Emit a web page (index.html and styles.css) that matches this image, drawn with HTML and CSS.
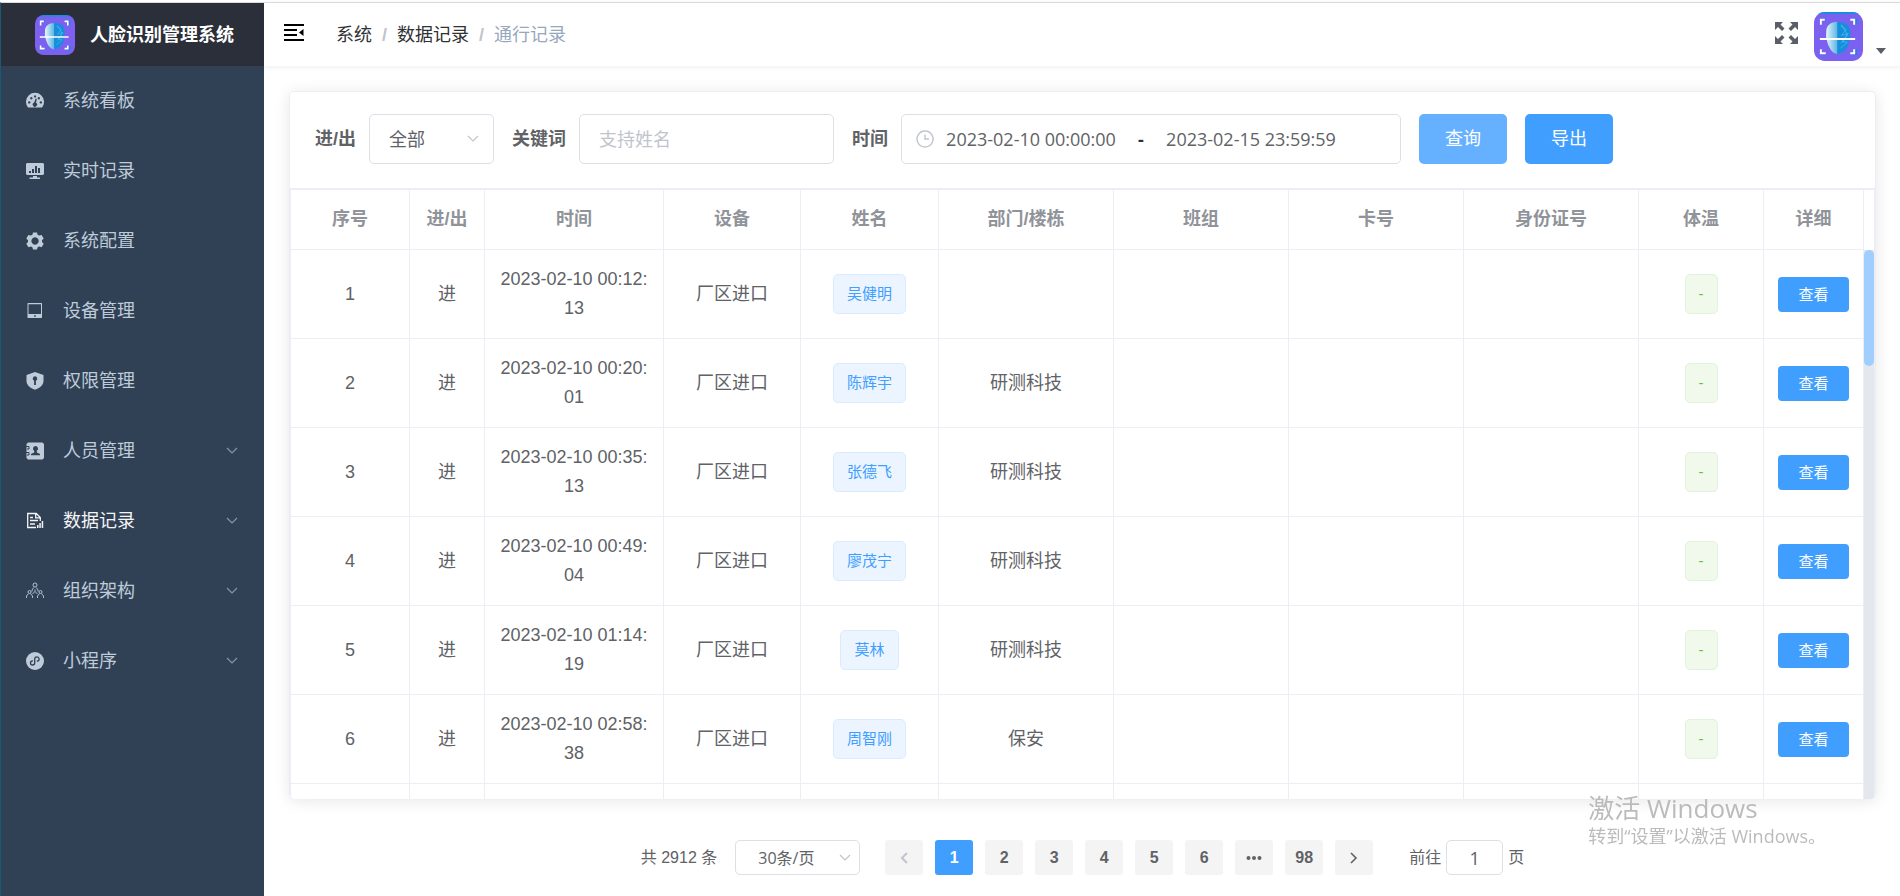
FILE: index.html
```html
<!DOCTYPE html>
<html lang="zh-CN">
<head>
<meta charset="utf-8">
<title>人脸识别管理系统</title>
<link rel="stylesheet" href="styles.css">
</head>
<body>
<svg class="defs" aria-hidden="true">
  <defs>
    <linearGradient id="face-left" x1="0" x2="1" y1="0" y2="0">
      <stop offset="0" stop-color="#e6f5fb"/><stop offset="1" stop-color="#56b6e2"/>
    </linearGradient>
    <clipPath id="logo-clip"><rect width="50" height="50" rx="11"/></clipPath>
    <symbol id="logo" viewBox="0 0 50 50">
      <g clip-path="url(#logo-clip)">
        <rect width="50" height="50" fill="#7c60f0"/>
        <rect width="50" height="2" fill="#1590dc"/>
        <path d="M24 10c-7 0-11.500 4-11.500 10 0 4-.5 5 .5 8 1 5 4 14 11 15z" fill="url(#face-left)"/>
        <path d="M24 10c8 0 13 4 13 11 0 9-2 20-13 22z" fill="#1390dc"/>
        <path d="M27 14l6 4-5 6 7-2-6 8 5 1-7 6m1-24l6 10-6 9" fill="none" stroke="#7cc4f4" stroke-width=".5"/>
        <path d="M7 13V8h5M38 8h5v5M43 38v5h-5M12 43H7v-5" fill="none" stroke="#1a86d8" stroke-width="2"/>
        <path d="M7 13V8h4M37 8h4v5M41 38v4h-4M12 42H7v-4" fill="none" stroke="#fff" stroke-width="2"/>
        <path d="M6 27.500h36" stroke="#fff" stroke-width="2"/>
      </g>
    </symbol>
    <symbol id="down" viewBox="0 0 12 8"><path d="M1 1l5 5 5-5" fill="none" stroke="currentColor" stroke-width="1.200"/></symbol>
  </defs>
</svg>
<div class="app">
  <aside class="sidebar">
    <div class="brand"><svg class="brand-logo"><use href="#logo"/></svg><h1>人脸识别管理系统</h1></div>
    <nav class="menu">
      <a href="#" class="menu-item">
        <svg class="menu-icon" viewBox="0 0 18 18"><path fill="currentColor" fill-rule="evenodd" d="M2 15.500A9 9 0 1 1 16 15.500zM3.200 9.200a1.200 1.200 0 1 0 .1 0zM5.300 5a1.200 1.200 0 1 0 .1 0zM9 3.300a1.100 1.100 0 1 0 .1 0zM14.800 9.200a1.200 1.200 0 1 0 .1 0zM12.800 5a1.200 1.200 0 1 0 .1 0zM9.600 6.500L8.200 10.600a2.100 2.100 0 1 0 1.800.2l.8-4z"/></svg>
        <span>系统看板</span></a>
      <a href="#" class="menu-item">
        <svg class="menu-icon" viewBox="0 0 18 18"><path fill="currentColor" fill-rule="evenodd" d="M1 1h16l1 1v10l-1 1H1l-1-1V2zM3 9v2h2V9zM6 7v4h2V7zM9 4v7h2V4zM12 6v5h2V6zM7 14h4v1.500h3V17H3.500v-1.500H7z"/></svg>
        <span>实时记录</span></a>
      <a href="#" class="menu-item">
        <svg class="menu-icon" viewBox="0 0 18 18"><path fill="currentColor" fill-rule="evenodd" d="M7 .5h4l.6 2.300 1.500.8 2.500-.7 2.100 3.500-1.700 1.800v1.700l1.700 1.800-2.100 3.500-2.500-.7-1.500.8L11 17.500H7l-.6-2.200-1.500-.8-2.500.7-2.100-3.500L2 9.900V8.200L.3 6.400l2.100-3.500 2.500.7 1.500-.8zM9 5.300a3.700 3.700 0 1 0 .1 0z"/></svg>
        <span>系统配置</span></a>
      <a href="#" class="menu-item">
        <svg class="menu-icon" viewBox="0 0 18 18"><path fill="currentColor" fill-rule="evenodd" d="M2 1h13.500l.5.500v14l-.5.500H2l-.5-.5v-14zM2.500 2.200V12H15V2.200zM8.200 13.300v1.500h1.600v-1.500z"/></svg>
        <span>设备管理</span></a>
      <a href="#" class="menu-item">
        <svg class="menu-icon" viewBox="0 0 18 18"><path fill="currentColor" fill-rule="evenodd" d="M9 0l8.500 3v6c0 4-3.500 7-8.500 8.700C4 16 .5 13 .5 9V3zM9 4.300a2.300 2.300 0 0 0-.9 4.400V13h1.800V8.700A2.300 2.300 0 0 0 9 4.300z"/></svg>
        <span>权限管理</span></a>
      <a href="#" class="menu-item">
        <svg class="menu-icon" viewBox="0 0 18 18"><path fill="currentColor" fill-rule="evenodd" d="M2 .5h14.500L18 2v14l-1.500 1.500H2L.5 16V2zM9.500 4a2.600 2.600 0 0 0-1.300 4.800v1.700L5 12v1.200h9V12l-3.200-1.500V8.800A2.600 2.600 0 0 0 9.500 4z"/><path fill="none" stroke="#304156" d="M0 4.500h3v2.500H1M0 10.500h3V13H1"/></svg>
        <span>人员管理</span><svg class="arrow"><use href="#down"/></svg></a>
      <a href="#" class="menu-item active">
        <svg class="menu-icon" viewBox="0 0 18 18"><path fill="none" stroke="currentColor" stroke-width="1.300" d="M10 15.500H1.700v-14h8.600l4 4V9M9.700 1.500v4.300h4.500M4 5.500h3M4 8.500h8M4 12h5"/><path fill="currentColor" d="M11 13h1.500v3H11zM13.300 11h1.500v5h-1.500zM15.700 9h1.500v7h-1.500z"/></svg>
        <span>数据记录</span><svg class="arrow"><use href="#down"/></svg></a>
      <a href="#" class="menu-item">
        <svg class="menu-icon" viewBox="0 0 18 18"><g fill="none" stroke="currentColor" stroke-width=".9"><circle cx="9" cy="3" r="2"/><path d="M6 9.500V8l1.700-2.500M12 9.500V8l-1.700-2.500M9 9.500L6.500 12M9 9.500l2.500 2.500M9 7.500v2"/><circle cx="3.500" cy="10" r="1.500"/><circle cx="14.500" cy="10" r="1.500"/><path d="M.5 16v-2l2-2.500M6.500 16v-2l-2-2.500M11.500 16v-2l2-2.500M17.500 16v-2l-2-2.500"/></g></svg>
        <span>组织架构</span><svg class="arrow"><use href="#down"/></svg></a>
      <a href="#" class="menu-item">
        <svg class="menu-icon" viewBox="0 0 18 18"><circle cx="9" cy="9" r="9" fill="currentColor"/><path d="M6.500 8.800a2.100 2.100 0 1 0 2.200 2.200V7a2.200 2.200 0 1 1 2.600 2.200" fill="none" stroke="#304156" stroke-width="1.300" stroke-linecap="round"/></svg>
        <span>小程序</span><svg class="arrow"><use href="#down"/></svg></a>
    </nav>
  </aside>
  <main class="main">
    <header class="navbar">
      <button class="icon-button tool" type="button" aria-label="收起菜单"><svg class="fold" viewBox="0 0 20 17"><path d="M0 1h20M0 6h13M0 11h13M0 16h20" stroke="#000" stroke-width="2"/><path d="M19.500 5v7L15 8.500z"/></svg></button>
      <nav class="crumbs"><a href="#">系统</a><i>/</i><a href="#">数据记录</a><i>/</i><span>通行记录</span></nav>
      <button class="icon-button tool" type="button" aria-label="全屏"><svg class="full" viewBox="0 0 23 22"><g fill="#5a5e66"><path d="M0 0h8L5.500 2.500 9.500 6.500 7 9 3 5 0 8z"/><path d="M23 0h-8l2.500 2.500-4 4L16 9l4-4 3 3z"/><path d="M0 22h8l-2.500-2.500 4-4L7 13l-4 4-3-3z"/><path d="M23 22h-8l2.500-2.500-4-4L16 13l4 4 3-3z"/></g></svg></button>
      <button class="icon-button user" type="button" aria-label="用户"><svg class="avatar"><use href="#logo"/></svg><svg class="caret" viewBox="0 0 10 6"><path d="M0 0h10L5 6z" fill="#5a5e66"/></svg></button>
    </header>
    <section class="content">
      <div class="card">
        <form class="filters">
          <div class="field"><label for="dir">进/出</label><div class="select dir"><select id="dir"><option>全部</option></select><svg class="arrow"><use href="#down"/></svg></div></div>
          <div class="field"><label for="kw">关键词</label><input id="kw" class="box" type="text" placeholder="支持姓名"></div>
          <div class="field"><label for="from">时间</label>
            <div class="range"><svg class="clock" viewBox="0 0 18 18"><path d="M9 1a8 8 0 1 0 .1 0M9 4.500V9h4" fill="none" stroke="#c0c4cc" stroke-width="1.400"/></svg><input id="from" type="text" value="2023-02-10 00:00:00"><b>-</b><input type="text" aria-label="结束时间" value="2023-02-15 23:59:59"></div></div>
          <button class="btn hover" type="button">查询</button>
          <button class="btn" type="button">导出</button>
        </form>
        <div class="table-box">
          <div class="table-view">
            <table>
              <colgroup><col class="c-no"><col class="c-dir"><col class="c-time"><col class="c-dev"><col class="c-name"><col><col><col><col><col class="c-temp"><col class="c-act"></colgroup>
              <thead><tr><th>序号</th><th>进/出</th><th>时间</th><th>设备</th><th>姓名</th><th>部门/楼栋</th><th>班组</th><th>卡号</th><th>身份证号</th><th>体温</th><th>详细</th></tr></thead>
              <tbody>
                <tr><td>1</td><td>进</td><td>2023-02-10 00:12:13</td><td>厂区进口</td><td><span class="tag">吴健明</span></td><td></td><td></td><td></td><td></td><td><span class="tag ok">-</span></td><td><button class="btn small" type="button">查看</button></td></tr>
                <tr><td>2</td><td>进</td><td>2023-02-10 00:20:01</td><td>厂区进口</td><td><span class="tag">陈辉宇</span></td><td>研测科技</td><td></td><td></td><td></td><td><span class="tag ok">-</span></td><td><button class="btn small" type="button">查看</button></td></tr>
                <tr><td>3</td><td>进</td><td>2023-02-10 00:35:13</td><td>厂区进口</td><td><span class="tag">张德飞</span></td><td>研测科技</td><td></td><td></td><td></td><td><span class="tag ok">-</span></td><td><button class="btn small" type="button">查看</button></td></tr>
                <tr><td>4</td><td>进</td><td>2023-02-10 00:49:04</td><td>厂区进口</td><td><span class="tag">廖茂宁</span></td><td>研测科技</td><td></td><td></td><td></td><td><span class="tag ok">-</span></td><td><button class="btn small" type="button">查看</button></td></tr>
                <tr><td>5</td><td>进</td><td>2023-02-10 01:14:19</td><td>厂区进口</td><td><span class="tag">莫林</span></td><td>研测科技</td><td></td><td></td><td></td><td><span class="tag ok">-</span></td><td><button class="btn small" type="button">查看</button></td></tr>
                <tr><td>6</td><td>进</td><td>2023-02-10 02:58:38</td><td>厂区进口</td><td><span class="tag">周智刚</span></td><td>保安</td><td></td><td></td><td></td><td><span class="tag ok">-</span></td><td><button class="btn small" type="button">查看</button></td></tr>
                <tr><td></td><td></td><td></td><td></td><td></td><td></td><td></td><td></td><td></td><td></td><td></td></tr>
              </tbody>
            </table>
          </div>
          <div class="gutter"><div class="track"><div class="thumb"></div></div></div>
        </div>
      </div>
      <nav class="pager" aria-label="分页">
        <span class="total">共 2912 条</span>
        <div class="select size"><select aria-label="每页条数"><option>30条/页</option></select><svg class="arrow"><use href="#down"/></svg></div>
        <div class="pages">
          <button type="button" disabled aria-label="上一页"><svg viewBox="0 0 8 12"><path d="M7 1L2 6l5 5" fill="none" stroke="currentColor" stroke-width="2"/></svg></button>
          <button type="button" class="current">1</button><button type="button">2</button><button type="button">3</button><button type="button">4</button><button type="button">5</button><button type="button">6</button>
          <button type="button" aria-label="更多"><svg class="dots" viewBox="0 0 16 4"><g fill="currentColor"><circle cx="2.500" cy="2" r="2"/><circle cx="8" cy="2" r="2"/><circle cx="13.500" cy="2" r="2"/></g></svg></button>
          <button type="button">98</button>
          <button type="button" aria-label="下一页"><svg viewBox="0 0 8 12"><path d="M1 1l5 5-5 5" fill="none" stroke="currentColor" stroke-width="1.600"/></svg></button>
        </div>
        <div class="jump"><label for="page">前往</label><input id="page" class="box" type="text" value="1"><span>页</span></div>
      </nav>
    </section>
  </main>
</div>
<div class="watermark"><p class="wm-title">激活 Windows</p><p>转到“设置”以激活 Windows。</p></div>
</body>
</html>
```
FILE: styles.css
```css
* { box-sizing: border-box; }
body {
  margin: 0;
  font: 18px/24px "Liberation Sans", "Noto Sans CJK SC", sans-serif;
  color: #606266;
  background: #fff;
}
h1, p { margin: 0; }
a { color: inherit; text-decoration: none; }
button, input, select { font: inherit; color: inherit; }
svg { display: block; flex: none; }
.defs { position: absolute; width: 0; height: 0; }

.app {
  display: flex;
  height: 100vh;
  padding-top: 2px;
}

.sidebar {
  display: flex;
  flex-direction: column;
  width: 264px;
  flex: none;
  border-top: 1px solid #d9dadd;
  border-left: 1px solid #175a78;
  background: #304156;
}
.brand {
  display: flex;
  align-items: center;
  gap: 15px;
  height: 63px;
  padding: 0 34px;
  background: #2b2f3a;
  color: #fff;
}
.brand-logo { width: 40px; height: 40px; }
.brand h1 { font-size: 18px; font-weight: 700; white-space: nowrap; }
.menu-item {
  display: flex;
  align-items: center;
  height: 70px;
  padding: 0 26px 0 25px;
  color: #bfcbd9;
}
.menu-icon { width: 18px; height: 18px; margin-right: 19px; }
.menu-item .arrow { margin-left: auto; color: #8a95a3; }
.menu-item.active { color: #f4f4f5; }
.arrow { width: 12px; height: 8px; }

.main {
  display: flex;
  flex-direction: column;
  flex: 1;
  min-width: 0;
}
.navbar {
  display: flex;
  align-items: center;
  height: 64px;
  flex: none;
  padding: 4px 14px 0 20px;
  border-top: 1px solid #d9dadd;
  box-shadow: 0 1px 5px rgba(0, 21, 41, .08);
}
.icon-button { padding: 0; border: 0; background: none; }
.icon-button.tool { margin-bottom: 8px; }
.fold { width: 20px; height: 17px; }
.crumbs {
  display: flex;
  flex: 1;
  gap: 10px;
  margin: 0 0 4px 32px;
  color: #303133;
}
.crumbs i { font-style: normal; font-weight: 700; color: #c0c4cc; }
.crumbs span { color: #97a8be; }
.full { width: 23px; height: 22px; margin-right: 16px; }
.user { display: flex; align-items: flex-end; gap: 13px; }
.avatar { width: 49px; height: 49px; }
.caret { width: 10px; height: 6px; margin-bottom: 7px; }

.content {
  display: flex;
  flex-direction: column;
  flex: 1;
  min-height: 0;
  padding: 25px 24px 21px 25px;
}
.card {
  display: flex;
  flex-direction: column;
  flex: 1;
  min-height: 0;
  border: 1px solid #ebeef5;
  border-bottom: 0;
  border-radius: 5px;
  box-shadow: 0 2px 15px rgba(0, 0, 0, .1);
  overflow: hidden;
}
.filters {
  display: flex;
  flex-wrap: wrap;
  gap: 18px;
  padding: 22px 25px 24px;
}
.field { display: flex; align-items: center; gap: 13px; }
.field label { font-weight: 700; }
.box, .select select, .range {
  height: 50px;
  border: 1px solid #dcdfe6;
  border-radius: 5px;
  background: #fff;
  font-family: "Open Sans", "Noto Sans CJK SC", sans-serif;
  outline: 0;
}
.field .box { width: 255px; padding: 0 19px; }
.box::placeholder { color: #c0c4cc; }
.select { position: relative; width: 125px; }
.select select { width: 100%; padding: 0 19px; appearance: none; }
.select .arrow {
  position: absolute;
  top: 50%;
  right: 15px;
  margin-top: -4px;
  color: #c0c4cc;
  pointer-events: none;
}
.range {
  display: flex;
  align-items: center;
  width: 500px;
  padding: 0 52px 0 14px;
}
.range input {
  flex: 1;
  min-width: 0;
  padding: 0;
  border: 0;
  text-align: center;
  font-family: inherit;
  outline: 0;
}
.range b { width: 26px; text-align: center; color: #303133; }
.clock { width: 18px; height: 18px; }
.btn {
  height: 50px;
  padding: 0 26px;
  border: 0;
  border-radius: 5px;
  background: #409eff;
  color: #fff;
}
.btn.hover { background: #66b1ff; }
.btn.small {
  display: block;
  height: 35px;
  margin: 0 auto;
  padding: 0 20px;
  border-radius: 4px;
  font-size: 15px;
}

.table-box {
  display: flex;
  flex: 1;
  min-height: 0;
  border: solid #ebeef5;
  border-width: 2px 1px 0;
}
.table-view { flex: 1; min-width: 0; overflow: hidden; }
table { width: 100%; table-layout: fixed; border-spacing: 0; }
.c-no { width: 119px; }
.c-dir { width: 75px; }
.c-time { width: 179px; }
.c-dev { width: 137px; }
.c-name { width: 138px; }
.c-temp { width: 125px; }
.c-act { width: 100px; }
th, td {
  padding: 0 13px;
  border: solid #ebeef5;
  border-width: 0 1px 1px 0;
  text-align: center;
  line-height: 29px;
  word-break: break-all;
}
th { height: 60px; color: #909399; }
td { height: 89px; }
.tag {
  display: block;
  width: fit-content;
  height: 40px;
  margin: 0 auto;
  padding: 0 13px;
  border: 1px solid #d9ecff;
  border-radius: 5px;
  background: #ecf5ff;
  color: #409eff;
  font-size: 15px;
  line-height: 38px;
  white-space: nowrap;
}
.tag.ok { border-color: #e1f3d8; background: #f0f9eb; color: #67c23a; }
.gutter { width: 10px; padding-top: 60px; }
.track { height: 100%; background: #e4e7ed; }
.thumb { height: 116px; border-radius: 5px; background: #a0cfff; }

.pager {
  display: flex;
  justify-content: center;
  align-items: center;
  padding-top: 41px;
  font-size: 16px;
}
.pager .box, .pager select { height: 35px; }
.pager .size { margin: 0 25px 0 18px; }
.pager .size select { display: block; padding: 0 22px; }
.pager .size .arrow { right: 9px; }
.pages { display: flex; gap: 12px; }
.pages button {
  display: flex;
  align-items: center;
  justify-content: center;
  width: 38px;
  height: 35px;
  padding: 0;
  border: 0;
  border-radius: 3px;
  background: #f4f4f5;
  font-weight: 700;
}
.pages button.current { background: #409eff; color: #fff; }
.pages button:disabled { color: #c0c4cc; }
.pages svg { width: 8px; height: 12px; }
.pages .dots { width: 16px; height: 4px; }
.jump { display: flex; align-items: center; gap: 5px; margin-left: 36px; }
.jump .box { width: 57px; padding: 0; text-align: center; font-size: 18px; }

.watermark {
  position: fixed;
  right: 74px;
  bottom: 48px;
  color: #bbb;
  font-family: "Open Sans", "Noto Sans CJK SC", sans-serif;
  pointer-events: none;
}
.wm-title { font-size: 26px; line-height: 32px; }
```
